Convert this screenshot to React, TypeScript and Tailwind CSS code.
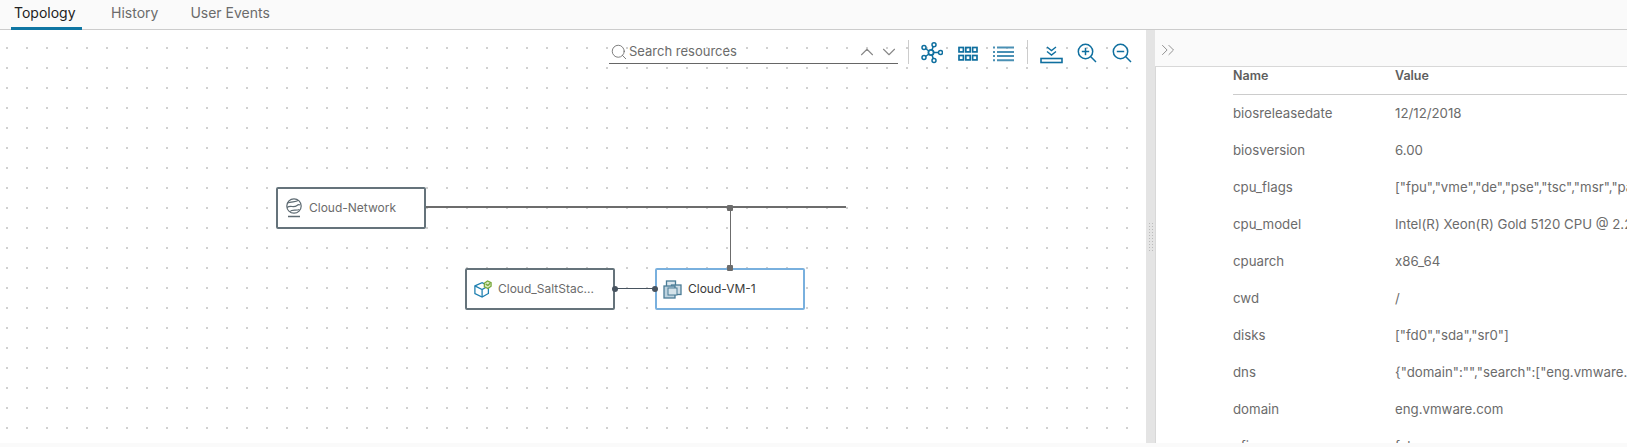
import type { ReactNode } from 'react'
import { ChevronUp, ChevronDown, ChevronsRight, Search } from 'lucide-react'

const FONT = "font-['Inter','Noto_Sans',sans-serif]"

const ROWS: [string, string][] = [
  ['biosreleasedate', '12/12/2018'],
  ['biosversion', '6.00'],
  ['cpu_flags', '["fpu","vme","de","pse","tsc","msr","pae","mce","cx8"]'],
  ['cpu_model', 'Intel(R) Xeon(R) Gold 5120 CPU @ 2.20GHz'],
  ['cpuarch', 'x86_64'],
  ['cwd', '/'],
  ['disks', '["fd0","sda","sr0"]'],
  ['dns', '{"domain":"","search":["eng.vmware.com"]}'],
  ['domain', 'eng.vmware.com'],
  ['efi', 'false'],
]

function TopologyIcon() {
  return (
    <svg width="22" height="22" viewBox="0 0 22 22" fill="none" stroke="#0f6f9f" strokeWidth="1.5">
      <path d="M10 10.5L13 2.5M10 10.5L3 5.5M10 10.5H19.5M10 10.5L13 18.5M10 10.5L3 15.5" />
      <circle cx="10" cy="10.5" r="2.6" fill="#fff" strokeWidth="1.8" />
      <circle cx="13" cy="2.8" r="2" fill="#fff" />
      <circle cx="3" cy="5.5" r="2" fill="#fff" />
      <circle cx="19.5" cy="10.5" r="2" fill="#fff" />
      <circle cx="13" cy="18.5" r="2" fill="#fff" />
      <circle cx="3" cy="15.5" r="2" fill="#fff" />
    </svg>
  )
}

function GridIcon() {
  return (
    <svg width="20" height="16" viewBox="0 0 20 16" fill="none" stroke="#0f6f9f" strokeWidth="1.7">
      <rect x="1" y="1.5" width="4.4" height="4.4" />
      <rect x="7.8" y="1.5" width="4.4" height="4.4" />
      <rect x="14.6" y="1.5" width="4.4" height="4.4" />
      <rect x="1" y="9.5" width="4.4" height="4.4" />
      <rect x="7.8" y="9.5" width="4.4" height="4.4" />
      <rect x="14.6" y="9.5" width="4.4" height="4.4" />
    </svg>
  )
}

function ListIcon() {
  return (
    <svg width="22" height="16" viewBox="0 0 22 16" fill="none" stroke="#4a90b4" strokeWidth="1.9">
      <path d="M0 1.5h2M4 1.5h17M0 6h2M4 6h17M0 10h2M4 10h17M0 14.3h2M4 14.3h17" />
    </svg>
  )
}

function CollapseIcon() {
  return (
    <svg width="23" height="18" viewBox="0 0 23 18" fill="none" stroke="#0f6f9f" strokeWidth="1.4">
      <path d="M7 1l4.5 3.5L16 1M7 5.5L11.5 9 16 5.5" />
      <rect x="1" y="12.5" width="21" height="4" strokeWidth="1.6" />
    </svg>
  )
}

function ZoomIcon({ plus }: { plus?: boolean }) {
  return (
    <svg width="20" height="20" viewBox="0 0 20 20" fill="none" stroke="#0f6f9f" strokeWidth="1.5">
      <circle cx="8.5" cy="8.5" r="7.2" />
      <path d="M13.8 13.8L19 19" />
      <path d="M4.8 8.5h7.4" />
      {plus && <path d="M8.5 4.8v7.4" />}
    </svg>
  )
}

function NetworkIcon() {
  return (
    <svg width="18" height="20" viewBox="0 0 18 20" fill="none" stroke="#5d6a72" strokeWidth="1.2">
      <circle cx="9" cy="8" r="7.2" />
      <path d="M2.5 5C6 3.5 11 4 13 2.5M2 9.5C5 7 9 10 12 7.5c1-.8 2-1 3-.5M5 13.5C7 11 11 13 14.5 11.5" />
      <path d="M3 18.5h12" strokeWidth="1.5" />
    </svg>
  )
}

function VmIcon() {
  return (
    <svg width="19" height="19" viewBox="0 0 19 19" fill="none" stroke="#4a7c96" strokeWidth="1.3" className="mr-[1px]">
      <rect x="3.5" y="1" width="9" height="9" fill="#dbe7ee" />
      <rect x="8.5" y="5" width="9.5" height="9.5" fill="#cddde6" />
      <rect x="1" y="6" width="11" height="12" fill="#bdd2de" />
      <rect x="5" y="8" width="9" height="7" fill="#d5e3ea" strokeWidth="1" />
    </svg>
  )
}

function SaltIcon() {
  return (
    <svg width="20" height="20" viewBox="0 0 20 20" fill="none" className="ml-[1px] mr-[1px]">
      <path d="M1 6.5L9 3l7 3.5V15l-7 4-8-4z" stroke="#1d7fb0" strokeWidth="1.4" fill="#fff" />
      <path d="M1 6.5L9 10.5 16 6.5M9 10.5V19" stroke="#1d7fb0" strokeWidth="1.4" />
      <path d="M11.5 3.5L15 1l4 2v4l-3.5 2.5-4-2z" fill="#dcebc4" stroke="#78a83c" strokeWidth="1.4" />
      <path d="M13 4.5l2.5 1.5L18 3.5" stroke="#78a83c" strokeWidth="1.6" />
    </svg>
  )
}

function Node({ left, top, label, icon, selected }: { left: string; top: string; label: string; icon: ReactNode; selected?: boolean }) {
  return (
    <div className={`absolute ${left} ${top} flex h-[42px] w-[150px] items-center gap-[5px] rounded-[2px] border-2 bg-white pl-[6px] ${selected ? 'border-[#79b0de] text-[#3a3a3a]' : 'border-[#65737b] text-[#6b6b6b]'}`}>
      <span className="flex w-[20px] justify-center">{icon}</span>
      <span className="text-[12px] leading-none">{label}</span>
    </div>
  )
}

export default function App() {
  return (
    <div className={`${FONT} flex h-[447px] w-[1627px] flex-col overflow-hidden bg-white`}>
      {/* Tabs */}
      <div className="flex h-[30px] gap-[28px] border-b border-[#cccccc] bg-[#fafafa] pl-[11px] text-[14px] text-[#6b6b6b]">
        <div className="h-[30px] w-[71px] border-b-[3px] border-[#0f76a3] pl-[3px] pt-[2px] text-[#222]">Topology</div>
        <div className="h-[30px] px-[1px] pt-[2px]">History</div>
        <div className="h-[30px] pl-[3px] pt-[2px]">User Events</div>
      </div>

      <div className="flex min-h-0 flex-1">
        {/* Canvas */}
        <div className="relative w-[1146px] bg-white bg-[radial-gradient(circle,#d0d0d0_1px,transparent_1.2px)] bg-[size:20px_20px] bg-[position:-3px_8px]">
          <div className="absolute left-[609px] top-[10px] flex items-center">
            <div className="flex h-[24px] w-[289px] items-center border-b border-[#666] pl-[1px] text-[13px] text-[#6b6b6b]">
              <Search size={18} strokeWidth={1.1} color="#666" />
              <span className="ml-[1px]">Search resources</span>
              <ChevronUp size={22} strokeWidth={1.2} color="#888" className="ml-auto" />
              <ChevronDown size={22} strokeWidth={1.2} color="#888" className="-mr-[2px]" />
            </div>
            <div className="ml-[10px] h-[24px] w-px bg-[#ccc]" />
            <div className="ml-[12px] mt-[2px]"><TopologyIcon /></div>
            <div className="ml-[15px] mt-[3px]"><GridIcon /></div>
            <div className="ml-[15px] mt-[3px]"><ListIcon /></div>
            <div className="ml-[12px] h-[24px] w-px bg-[#ccc]" />
            <div className="ml-[12px] mt-[5px]"><CollapseIcon /></div>
            <div className="ml-[14px] mt-[2px]"><ZoomIcon plus /></div>
            <div className="ml-[15px] mt-[2px]"><ZoomIcon /></div>
          </div>

          <Node left="left-[276px]" top="top-[157px]" label="Cloud-Network" icon={<NetworkIcon />} />
          <Node left="left-[465px]" top="top-[238px]" label="Cloud_SaltStac..." icon={<SaltIcon />} />
          <Node left="left-[655px]" top="top-[238px]" label="Cloud-VM-1" icon={<VmIcon />} selected />

          {/* Links */}
          <div className="absolute left-[426px] top-[176px] h-[2px] w-[420px] bg-[#6c6c6c]" />
          <div className="absolute left-[730px] top-[177px] h-[62px] w-px bg-[#6c6c6c]" />
          <div className="absolute left-[727px] top-[175px] h-[6px] w-[6px] rounded-[1px] bg-[#6c6c6c]" />
          <div className="absolute left-[727px] top-[235px] h-[6px] w-[6px] rounded-[1px] bg-[#6c6c6c]" />
          <div className="absolute left-[615px] top-[258px] h-px w-[40px] bg-[#47535f]" />
          <div className="absolute left-[612px] top-[256px] h-[6px] w-[6px] rounded-full bg-[#47535f]" />
          <div className="absolute left-[652px] top-[256px] h-[6px] w-[6px] rounded-full bg-[#47535f]" />
        </div>

        {/* Splitter */}
        <div className="flex h-[413px] w-[9px] items-start justify-center bg-[#e4e4e4] pt-[192px]">
          <div className="h-[30px] w-[6px] bg-[radial-gradient(#bbb_1px,transparent_1px)] bg-[size:3px_3px]" />
        </div>

        {/* Detail panel */}
        <div className="flex min-w-0 flex-1 flex-col">
          <div className="flex h-[37px] shrink-0 items-center border-b border-[#d8d8d8] bg-[#fafafa] pl-[2px] pt-[3px]">
            <ChevronsRight size={22} strokeWidth={1} color="#888" />
          </div>
          <div className="h-[376px] overflow-hidden border-l border-[#d8d8d8] pl-[77px] text-[13.25px] text-[#6b6b6b]">
            <div className="flex h-[28px] items-center border-b border-[#ccc] pb-[8px] text-[12.5px] font-semibold text-[#5e5e5e]">
              <div className="w-[162px]">Name</div>
              <div>Value</div>
            </div>
            {ROWS.map(([name, value]) => (
              <div key={name} className="flex h-[37px] items-center whitespace-nowrap">
                <div className="w-[162px] shrink-0">{name}</div>
                <div>{value}</div>
              </div>
            ))}
          </div>
        </div>
      </div>
      <div className="h-[4px] shrink-0 bg-[#fafafa]" />
    </div>
  )
}
